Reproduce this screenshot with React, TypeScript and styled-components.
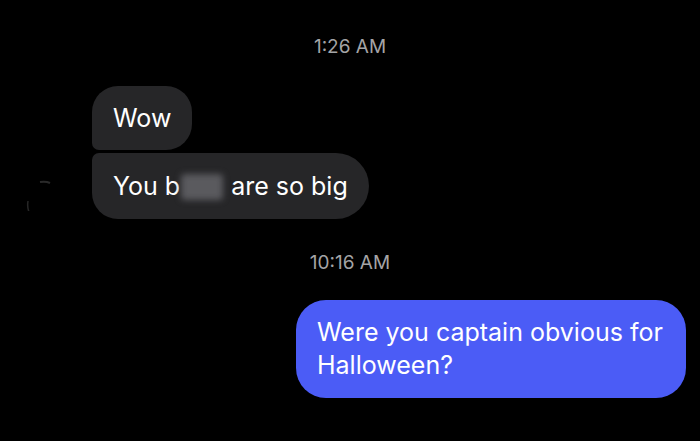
import React from "react";
import styled, { createGlobalStyle } from "styled-components";

const GlobalStyle = createGlobalStyle`
  html, body {
    margin: 0;
    padding: 0;
    background: #000;
  }
  body {
    font-family: Inter, "Liberation Sans", Arial, sans-serif;
    -webkit-font-smoothing: antialiased;
  }
`;

const Screen = styled.div`
  width: 700px;
  height: 441px;
  background: #000;
  display: flex;
  flex-direction: column;
  padding-top: 36px;
  box-sizing: border-box;
  overflow: hidden;
`;

const Stamp = styled.div<{ $gap: number }>`
  text-align: center;
  color: #a4a4a6;
  font-size: 19px;
  line-height: 22px;
  margin-bottom: ${({ $gap }) => $gap}px;
`;

const IncomingGroup = styled.div`
  display: flex;
  align-items: flex-end;
  padding-left: 20px;
  margin-bottom: 33px;
`;

const AvatarSlot = styled.div`
  width: 72px;
  height: 66px;
  display: flex;
  align-items: center;
`;

const Bubbles = styled.div`
  display: flex;
  flex-direction: column;
  align-items: flex-start;
  gap: 3px;
`;

const Bubble = styled.div<{ $pos: "first" | "last" }>`
  background: #262628;
  color: #fff;
  font-size: 25px;
  line-height: 30px;
  padding: ${({ $pos }) => ($pos === "first" ? "17px 21px" : "18px 21px")};
  border-radius: ${({ $pos }) =>
    $pos === "first" ? "26px 26px 26px 7px" : "7px 33px 33px 26px"};
  white-space: nowrap;
`;

const Hidden = styled.span`
  display: inline-block;
  width: 42px;
  height: 26px;
  vertical-align: -5px;
  margin: 0 8px 0 1px;
  background: #5a5a5e;
  border-radius: 4px;
  filter: blur(3px);
`;

const OutgoingRow = styled.div`
  display: flex;
  justify-content: flex-end;
  padding-right: 14px;
`;

const SentBubble = styled.div`
  background: #4b5cf6;
  color: #fff;
  font-size: 25px;
  line-height: 33px;
  width: 390px;
  box-sizing: border-box;
  padding: 16px 18px 16px 21px;
  border-radius: 30px;
`;

function GhostAvatar() {
  return (
    <svg width="40" height="50" viewBox="0 0 40 50">
      <path d="M20 21 Q26 20 30 22" stroke="#2a2a2a" strokeWidth="2" fill="none" />
      <path d="M8 40 Q7 46 9 51" stroke="#262626" strokeWidth="1.5" fill="none" />
    </svg>
  );
}

export default function App() {
  return (
    <>
      <GlobalStyle />
      <Screen>
        <Stamp $gap={28}>1:26 AM</Stamp>
        <IncomingGroup>
          <AvatarSlot>
            <GhostAvatar />
          </AvatarSlot>
          <Bubbles>
            <Bubble $pos="first">Wow</Bubble>
            <Bubble $pos="last">
              You b<Hidden />are so big
            </Bubble>
          </Bubbles>
        </IncomingGroup>
        <Stamp $gap={26}>10:16 AM</Stamp>
        <OutgoingRow>
          <SentBubble>Were you captain obvious for Halloween?</SentBubble>
        </OutgoingRow>
      </Screen>
    </>
  );
}
